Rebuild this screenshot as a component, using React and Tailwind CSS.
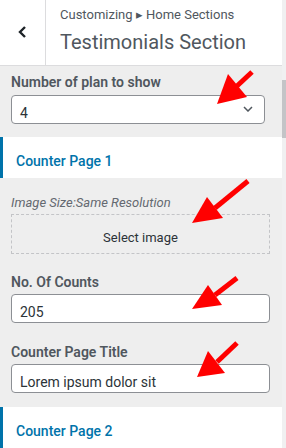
import React from "react";

const arrows = [
  { tip: "217,104", a: "228,74", b: "247,97", from: [252, 72], to: [237, 86] },
  { tip: "192,223", a: "207,197", b: "223,218", from: [248, 181], to: [215, 208] },
  { tip: "192,309", a: "208,285", b: "222,305", from: [237, 278], to: [215, 295] },
  { tip: "197,377", a: "208,351", b: "225,373", from: [237, 343], to: [217, 362] },
];

function Field({ value }) {
  return (
    <div className="w-[259px] h-[29px] bg-white border border-[#8c8f94] rounded-[4px] flex items-center px-[8px] text-[14px] text-[#2c3338]">
      <span className="pt-[8px]">{value}</span>
    </div>
  );
}

function SectionTitle({ children }) {
  return (
    <div className="h-[43px] bg-white border-l-[3px] border-[#0073aa] flex items-center pl-[13px] pt-[8px] text-[14px] font-medium text-[#0073aa]">
      {children}
    </div>
  );
}

export default function App() {
  return (
    <div
      className="relative w-[286px] h-[448px] overflow-hidden flex bg-[#eeeeee]"
      style={{ fontFamily: "Roboto, 'Liberation Sans', sans-serif" }}
    >
      <div className="w-[282px] flex flex-col">
        {/* header */}
        <div className="h-[69px] bg-white border-b border-[#dcdcde] flex">
          <div className="w-[46px] border-r border-[#dcdcde] flex items-center justify-center">
            <svg width="10" height="14" viewBox="0 0 10 14">
              <polyline points="7,2 2,7 7,12" fill="none" stroke="#1d2327" strokeWidth="2.4" />
            </svg>
          </div>
          <div className="pl-[14px] pt-[5px]">
            <div className="text-[13px] leading-[20px] text-[#50575e]">Customizing ▸ Home Sections</div>
            <div className="mt-[3px] text-[20px] leading-[28px] text-[#50575e]">Testimonials Section</div>
          </div>
        </div>

        <div className="pl-[11px] pt-[6px] pb-[13px]">
          <div className="text-[14px] leading-[20px] font-semibold text-[#50575e]">Number of plan to show</div>
          <div className="mt-[3px] w-[254px] h-[29px] bg-white border border-[#8c8f94] rounded-[4px] flex items-center justify-between pl-[8px] pr-[11px] text-[14px] text-[#2c3338]">
            <span className="pt-[8px]">4</span>
            <svg width="10" height="6" viewBox="0 0 10 6">
              <polyline points="1,1 5,5 9,1" fill="none" stroke="#50575e" strokeWidth="1.5" />
            </svg>
          </div>
        </div>

        <SectionTitle>Counter Page 1</SectionTitle>

        <div className="pl-[11px] pt-[15px] pb-[14px]">
          <div className="text-[13px] leading-[20px] italic text-[#646970]">Image Size:Same Resolution</div>
          <div className="mt-[1px] w-[259px] h-[40px] border border-dashed border-[#c3c4c7] flex items-center justify-center pt-[8px] text-[13px] text-[#2c3338]">
            Select image
          </div>
          <div className="mt-[18px] text-[14px] leading-[20px] font-semibold text-[#50575e]">No. Of Counts</div>
          <div className="mt-[2px]">
            <Field value="205" />
          </div>
          <div className="mt-[19px] text-[14px] leading-[20px] font-semibold text-[#50575e]">Counter Page Title</div>
          <div className="mt-[2px]">
            <Field value="Lorem ipsum dolor sit" />
          </div>
        </div>

        <SectionTitle>Counter Page 2</SectionTitle>
        <div className="flex-1 bg-white" />
      </div>

      {/* scrollbar */}
      <div className="w-[4px] bg-[#f0f0f1] flex flex-col">
        <div className="mt-[80px] h-[58px] bg-[#c3c4c7]" />
      </div>

      {/* annotation arrows */}
      <svg className="absolute inset-0 pointer-events-none" width="286" height="448">
        {arrows.map((ar, i) => (
          <g key={i} fill="#ff0000" stroke="#ff0000">
            <line x1={ar.from[0]} y1={ar.from[1]} x2={ar.to[0]} y2={ar.to[1]} strokeWidth="5" />
            <polygon points={`${ar.tip} ${ar.a} ${ar.b}`} strokeWidth="0" />
          </g>
        ))}
      </svg>
    </div>
  );
}
